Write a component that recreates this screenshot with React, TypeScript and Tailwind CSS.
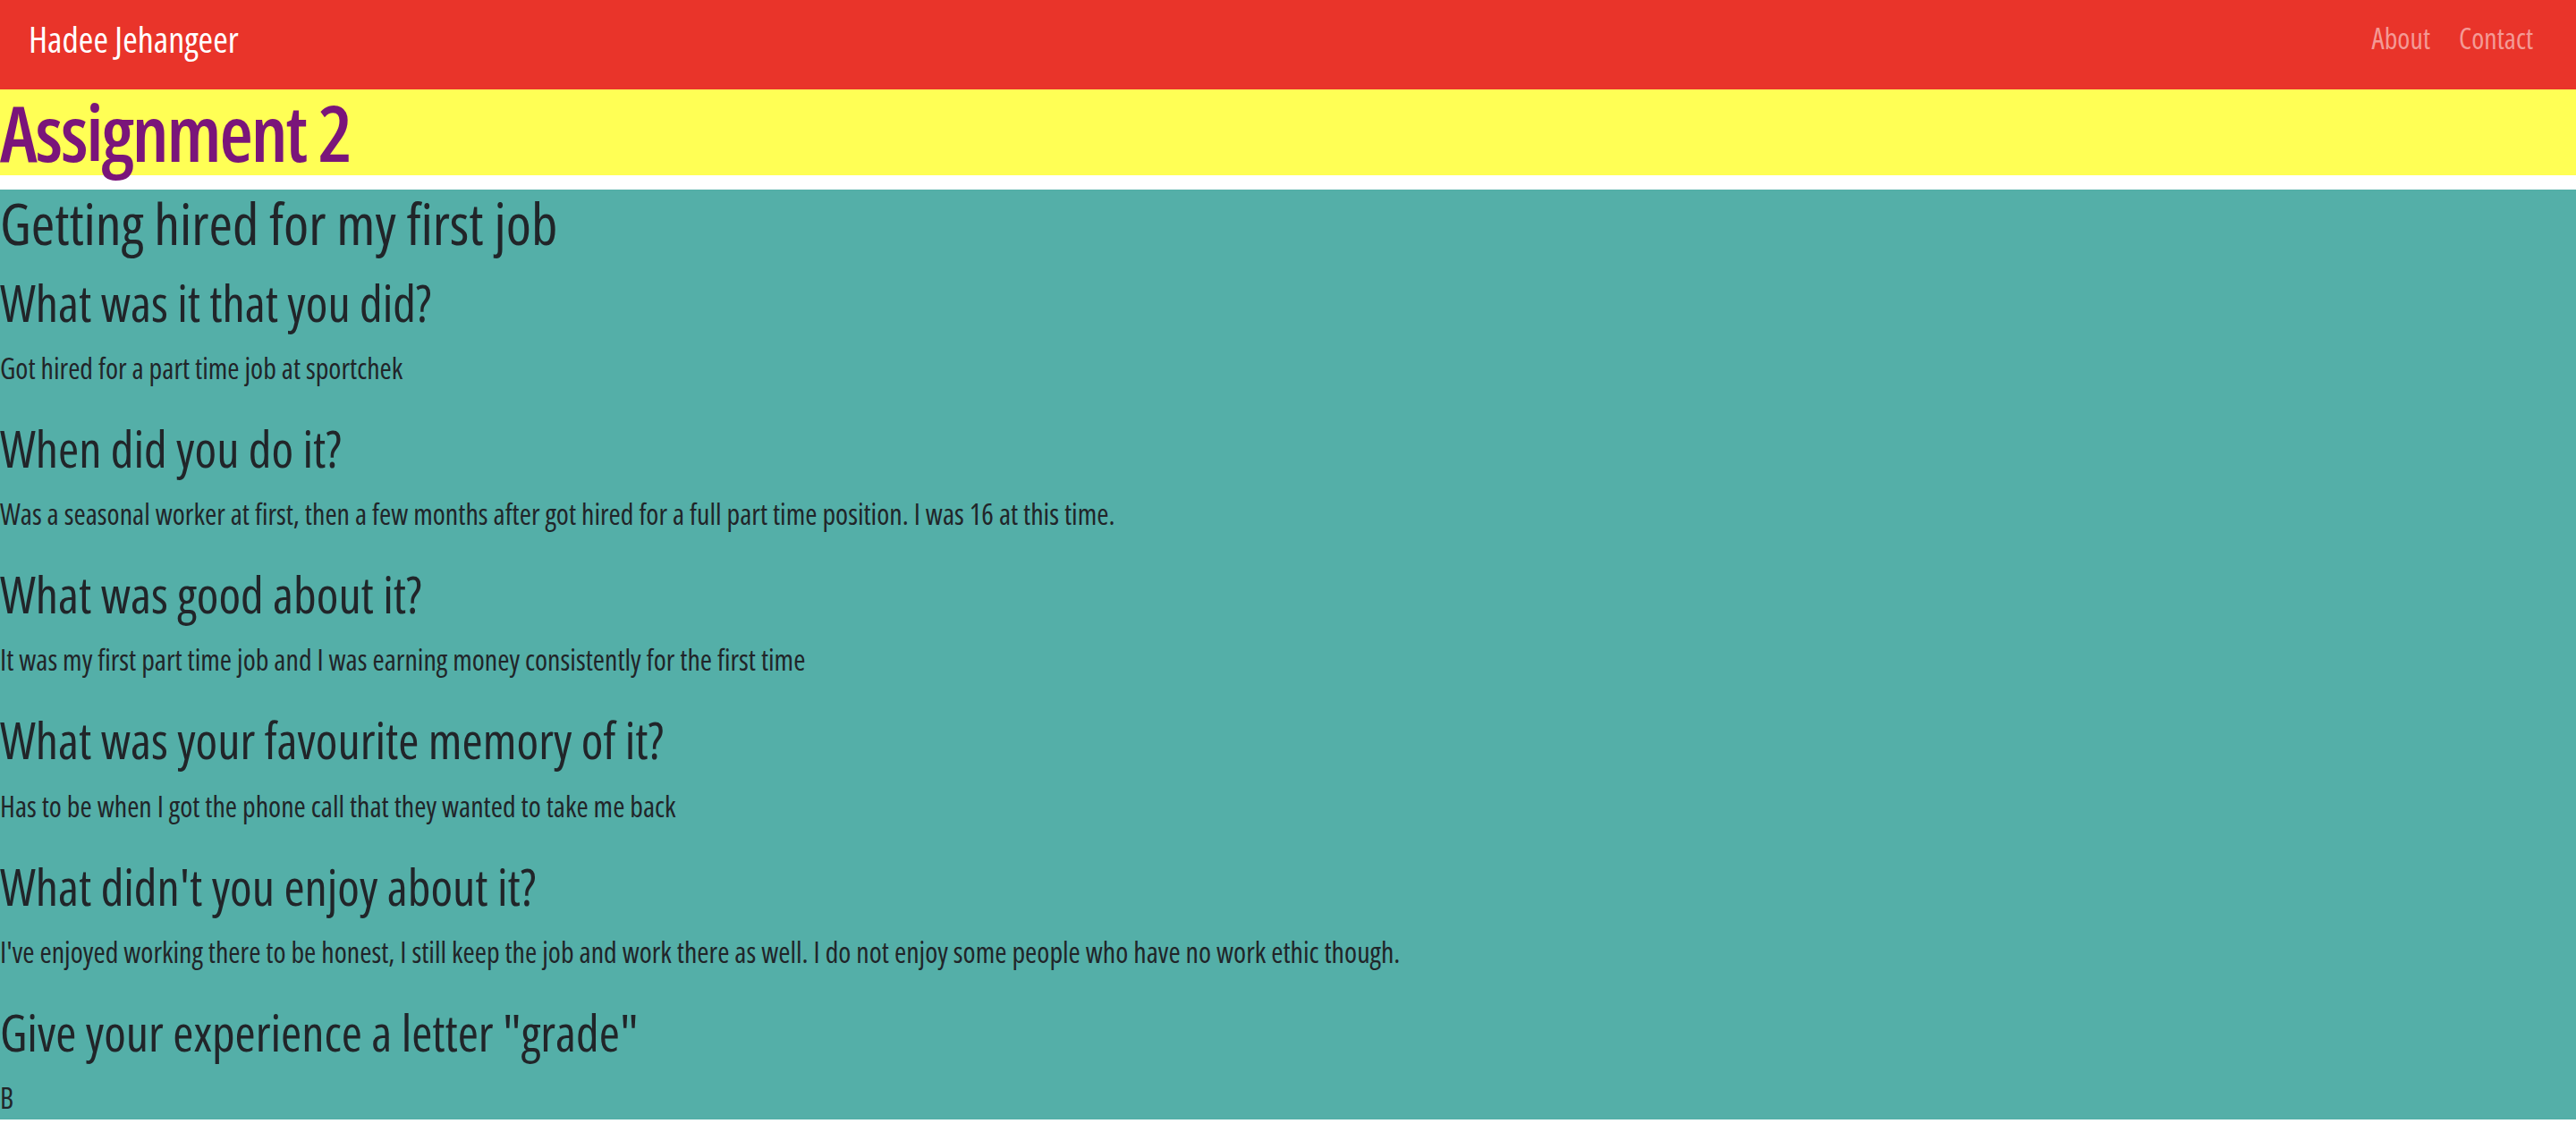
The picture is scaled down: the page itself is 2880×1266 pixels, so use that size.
import React from 'react';

const qa = [
  { q: 'What was it that you did?', a: 'Got hired for a part time job at sportchek' },
  {
    q: 'When did you do it?',
    a: 'Was a seasonal worker at first, then a few months after got hired for a full part time position. I was 16 at this time.',
  },
  { q: 'What was good about it?', a: 'It was my first part time job and I was earning money consistently for the first time' },
  { q: 'What was your favourite memory of it?', a: 'Has to be when I got the phone call that they wanted to take me back' },
  {
    q: "What didn't you enjoy about it?",
    a: "I've enjoyed working there to be honest, I still keep the job and work there as well. I do not enjoy some people who have no work ethic though.",
  },
  { q: 'Give your experience a letter "grade"', a: 'B' },
];

const Navbar: React.FC = () => {
  return (
    <nav className="flex h-[100px] items-center justify-between bg-[#e9342a] px-[32px]">
      <a href="#" className="mb-[12px] text-[40px] leading-[60px] text-white">Hadee Jehangeer</a>
      <div className="mb-[15px] flex">
        <a href="#" className="px-[16px] text-[32px] leading-[48px] text-[#f49a95]">About</a>
        <a href="#" className="px-[16px] text-[32px] leading-[48px] text-[#f49a95]">Contact</a>
      </div>
    </nav>
  );
};

const App: React.FC = () => {
  return (
    <div className="min-h-screen bg-white font-['Open_Sans',sans-serif] font-stretch-condensed text-[#212529]">
      <Navbar />
      <h1 className="mb-[16px] bg-[#ffff55] text-[86px] leading-[96px] font-semibold tracking-[-0.025em] text-[#7a157a]">
        Assignment 2
      </h1>
      <div className="bg-[#54afa8]">
        <h2 className="mb-[16px] text-[64px] leading-[76.8px] font-normal">Getting hired for my first job</h2>
        {qa.map((item, i) => (
          <div key={item.q}>
            <h3 className="mb-[16px] text-[56px] leading-[67.2px] font-normal">{item.q}</h3>
            <p className={i === qa.length - 1 ? 'text-[32px] leading-[48px]' : 'mb-[32px] text-[32px] leading-[48px]'}>
              {item.a}
            </p>
          </div>
        ))}
      </div>
    </div>
  );
};

export default App;
